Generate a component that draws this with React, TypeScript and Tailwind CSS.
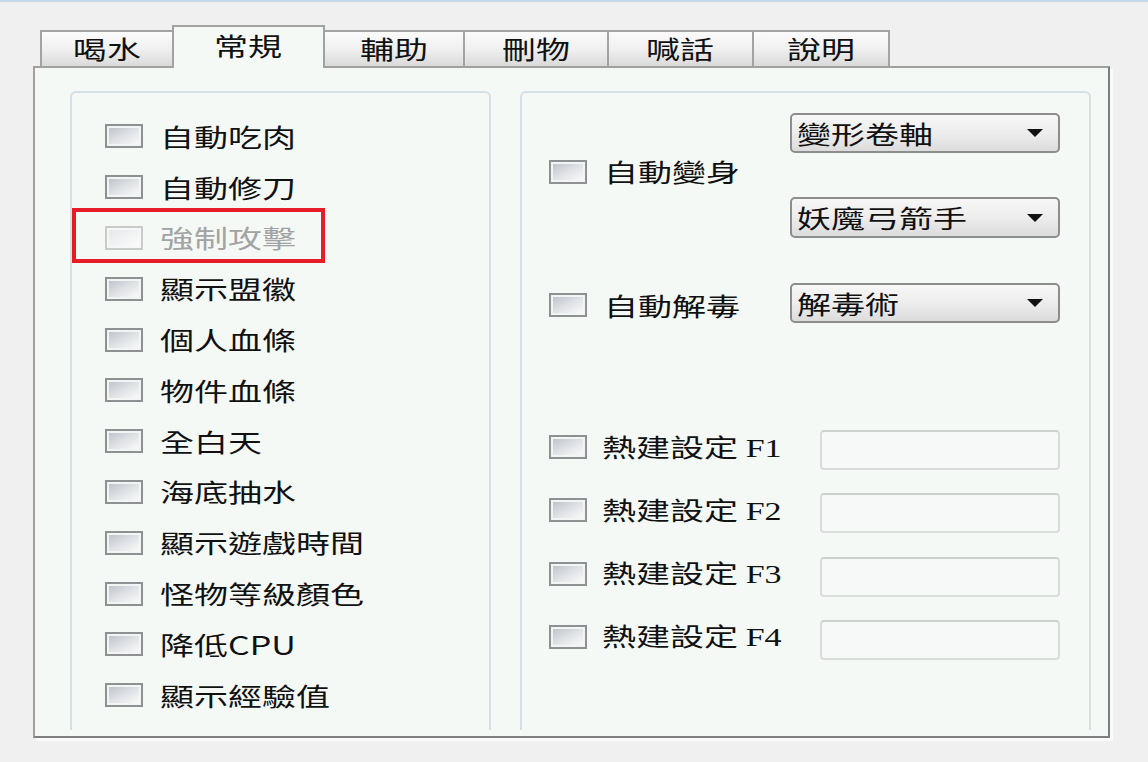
import React from "react";

const Check = ({ disabled = false }: { disabled?: boolean }) => (
  <div
    className={
      "w-[38px] h-[24px] shrink-0 border-2 p-[2px] " +
      (disabled ? "border-[#c9cbcb] bg-[#f7f7f7]" : "border-[#8e9191] bg-[#f3f4f4]")
    }
  >
    <div
      className={
        "w-full h-full bg-gradient-to-br " +
        (disabled
          ? "from-[#e6e8ea] via-[#f1f2f3] to-[#fbfbfb]"
          : "from-[#bfc5cc] via-[#dfe2e6] to-[#f9f9f9]")
      }
    />
  </div>
);

const Txt = ({ children, className = "" }: { children: React.ReactNode; className?: string }) => (
  <span className={"inline-block origin-left scale-x-[1.36] whitespace-nowrap leading-none text-[25px] " + className}>
    {children}
  </span>
);

const Item = ({ label, disabled = false }: { label: string; disabled?: boolean }) => (
  <div className="flex items-center gap-[17px]">
    <Check disabled={disabled} />
    <Txt className={disabled ? "text-[#a3a3a3]" : "text-[#111]"}>{label}</Txt>
  </div>
);

const Arrow = () => (
  <svg width="16" height="8" viewBox="0 0 16 8" className="shrink-0">
    <polygon points="0,0 16,0 8,8" fill="#111" />
  </svg>
);

const Select = ({ value, h = "h-[40px]" }: { value: string; h?: string }) => (
  <div
    className={
      "w-[270px] " +
      h +
      " flex items-center justify-between border-2 border-[#8d8d8d] rounded-[5px] bg-gradient-to-b from-[#f7f7f7] via-[#ededed] to-[#dcdcdc] pl-[5px] pr-[15px]"
    }
  >
    <Txt className="text-[#111]">{value}</Txt>
    <Arrow />
  </div>
);

const Input = () => (
  <div className="w-[240px] h-[40px] border-2 border-[#dadcdc] border-t-[#cfd1d1] rounded-[4px] bg-[#f7f9f8]" />
);

const tabs = [
  { t: "喝水", w: "w-[132px]", cls: "border-l-2 border-t-2" },
  { t: "常規", w: "w-[153px]", active: true },
  { t: "輔助", w: "w-[138px]", cls: "border-t-2" },
  { t: "刪物", w: "w-[144px]", cls: "border-l-2 border-t-2" },
  { t: "喊話", w: "w-[145px]", cls: "border-l-2 border-t-2" },
  { t: "說明", w: "w-[138px]", cls: "border-l-2 border-t-2 border-r-2" },
];

const leftItems = [
  "自動吃肉",
  "自動修刀",
  "強制攻擊",
  "顯示盟徽",
  "個人血條",
  "物件血條",
  "全白天",
  "海底抽水",
  "顯示遊戲時間",
  "怪物等級顏色",
  "降低CPU",
  "顯示經驗值",
];

export default function App() {
  return (
    <div className="w-[1148px] h-[762px] overflow-hidden bg-[#f0f0f0] border-t-2 border-[#c4d8ee] [font-family:'Noto_Sans_CJK_TC','Noto_Sans_CJK_SC',sans-serif]">
      <div className="pt-[23px] pl-[33px]">
        {/* tabs */}
        <div className="relative z-10 flex items-end h-[41px] pl-[7px]">
          {tabs.map((tb) =>
            tb.active ? (
              <div
                key={tb.t}
                className={tb.w + " h-[43px] -mb-[2px] border-2 border-b-0 border-[#a2a2a2] bg-[#f5f9f6] flex items-center justify-center pb-[4px]"}
              >
                <span className="inline-block scale-x-[1.36] text-[25px] leading-none text-[#111]">{tb.t}</span>
              </div>
            ) : (
              <div
                key={tb.t}
                className={
                  tb.w +
                  " h-[36px] " +
                  tb.cls +
                  " border-[#a3a3a3] bg-gradient-to-b from-[#fbfbfb] via-[#f0f0f0] to-[#dadada] flex items-center justify-center pb-[2px]"
                }
              >
                <span className="inline-block scale-x-[1.36] text-[25px] leading-none text-[#111]">{tb.t}</span>
              </div>
            )
          )}
        </div>

        {/* panel */}
        <div className="w-[1077px] h-[672px] border-2 border-t-[#a0a0a0] border-l-[#a0a0a0] border-r-[#7e7e7e] border-b-[#7e7e7e] bg-[#f5f9f6] shadow-[3px_3px_0_#fafafa] pt-[23px] pl-[35px] flex gap-[29px]">
          {/* left group */}
          <div className="relative w-[421px] h-[639px] border-2 border-b-0 border-[#d5dfe5] rounded-t-[6px] pt-[18px] pl-[33px]">
            {leftItems.map((l, i) => (
              <div key={l} className="relative h-[50.8px] flex items-center">
                {i === 2 && (
                  <div className="absolute left-[-33px] top-[-5px] w-[253px] h-[55px] border-[4px] border-[#e41d27]" />
                )}
                <Item label={l} disabled={i === 2} />
              </div>
            ))}
          </div>

          {/* right group */}
          <div className="w-[571px] h-[639px] border-2 border-b-0 border-[#d5dfe5] rounded-t-[6px] pt-[20px] pl-[27px] pr-[29px]">
            <div className="flex items-center">
              <div className="w-[241px] -mt-[8px]">
                <Item label="自動變身" />
              </div>
              <div className="flex flex-col gap-[44px]">
                <Select value="變形卷軸" />
                <Select value="妖魔弓箭手" h="h-[41px]" />
              </div>
            </div>
            <div className="mt-[45px] flex items-center">
              <div className="w-[241px] mt-[4px]">
                <Item label="自動解毒" />
              </div>
              <Select value="解毒術" />
            </div>
            <div className="mt-[107px] flex flex-col gap-[23.3px]">
              {["F1", "F2", "F3", "F4"].map((f) => (
                <div key={f} className="flex items-center">
                  <div className="w-[271px] -mt-[6px] flex items-center gap-[15px]">
                    <Check />
                    <Txt className="text-[#111]">
                      熱建設定 <span className="[font-family:'Liberation_Serif',serif] text-[25px]">{f}</span>
                    </Txt>
                  </div>
                  <Input />
                </div>
              ))}
            </div>
          </div>
        </div>
      </div>
    </div>
  );
}
